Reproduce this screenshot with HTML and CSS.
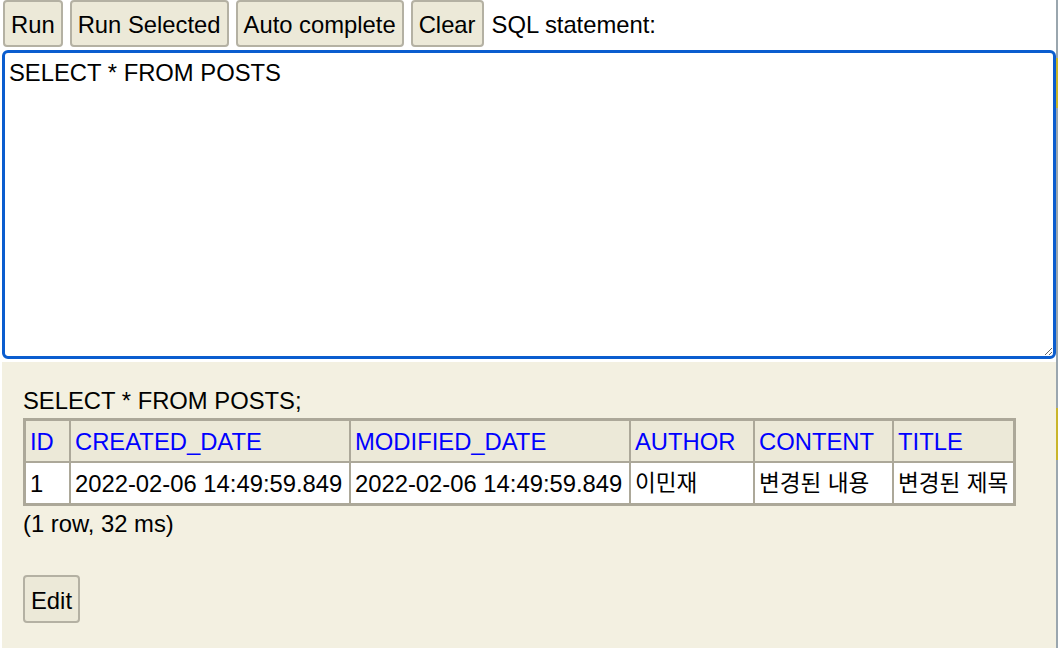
FILE: index.html
```html
<!DOCTYPE html>
<html>
<head>
<meta charset="utf-8">
<link rel="stylesheet" href="styles.css">
</head>
<body>
<div class="page">
  <div class="main">
    <div class="toolbar">
      <button class="btn">Run</button>
      <button class="btn">Run Selected</button>
      <button class="btn">Auto complete</button>
      <button class="btn">Clear</button>
      <span class="label">SQL statement:</span>
    </div>
    <div class="editor-wrap">
      <textarea class="editor">SELECT * FROM POSTS</textarea>
    </div>
    <div class="result">
      <div class="query">SELECT * FROM POSTS;</div>
      <table class="grid">
        <tr>
          <th class="c-id">ID</th>
          <th class="c-cd">CREATED_DATE</th>
          <th class="c-md">MODIFIED_DATE</th>
          <th class="c-au">AUTHOR</th>
          <th class="c-co">CONTENT</th>
          <th class="c-ti">TITLE</th>
        </tr>
        <tr>
          <td>1</td>
          <td>2022-02-06 14:49:59.849</td>
          <td>2022-02-06 14:49:59.849</td>
          <td class="ko">이민재</td>
          <td class="ko">변경된 내용</td>
          <td class="ko">변경된 제목</td>
        </tr>
      </table>
      <div class="info">(1 row, 32 ms)</div>
      <button class="btn edit">Edit</button>
    </div>
  </div>
  <div class="strip"></div>
</div>
</body>
</html>
```
FILE: styles.css
```css
html, body {
  margin: 0;
  padding: 0;
  background: #ffffff;
  overflow: hidden;
}
body {
  font-family: "Liberation Sans", Arial, "Noto Sans CJK KR", sans-serif;
  font-size: 23.8px;
  color: #000;
}
.page {
  display: flex;
  width: 1058px;
  height: 648px;
}
.main {
  width: 1056px;
  display: flex;
  flex-direction: column;
}
.strip {
  width: 2px;
  background: linear-gradient(to bottom,
    #9aa6ae 0px, #9aa6ae 58px,
    #c9b52a 58px, #c9b52a 108px,
    #9aa6ae 108px, #9aa6ae 408px,
    #c9b52a 408px, #c9b52a 460px,
    #9aa6ae 460px);
}
.toolbar {
  display: flex;
  align-items: center;
  gap: 7px;
  padding-left: 3px;
  height: 47px;
}
.btn {
  font-family: "Liberation Sans", Arial, sans-serif;
  font-size: 23.8px;
  color: #000;
  background: #ece9d8;
  border: 2px solid #b4b1a3;
  border-radius: 4px;
  height: 47px;
  padding: 3px 6px 0;
  margin: 0;
  line-height: 1;
}
.label {
  line-height: 1;
  padding-top: 3px;
  margin-left: 1px;
}
.editor-wrap {
  padding: 3px 0 0 2px;
}
.editor {
  display: block;
  box-sizing: border-box;
  width: 1054px;
  height: 309px;
  margin: 0;
  border: 3px solid #0b5dcf;
  border-radius: 6px;
  padding: 6px 4px;
  font-family: "Liberation Sans", Arial, sans-serif;
  font-size: 23.8px;
  line-height: 27px;
  color: #000;
  background: #fff;
  outline: none;
  resize: both;
}
.result {
  flex: 1;
  margin: 3px 0 0 2px;
  background: #f3f0e1;
  padding: 25px 0 0 21px;
  display: flex;
  flex-direction: column;
  align-items: flex-start;
}
.query {
  line-height: 27px;
}
.grid {
  margin-top: 4px;
  border-collapse: collapse;
  border: 3px solid #aca899;
  background: #fff;
  table-layout: fixed;
  width: 989px;
}
.grid th, .grid td {
  border: 2px solid #aca899;
  padding: 0 4px;
  height: 40px;
  line-height: 27px;
  text-align: left;
  white-space: nowrap;
  font-weight: normal;
}
.grid th {
  background: #ece9d8;
  color: #0000ff;
}
.grid td.ko {
  font-size: 22.6px;
}
.c-id { width: 35px; }
.c-cd { width: 270px; }
.c-md { width: 270px; }
.c-au { width: 114px; }
.c-co { width: 129px; }
.c-ti { width: 111px; }
.info {
  margin-top: 4px;
  line-height: 27px;
}
.edit {
  margin-top: 38px;
  height: 48px;
  padding: 3px 6px 0;
}
```
